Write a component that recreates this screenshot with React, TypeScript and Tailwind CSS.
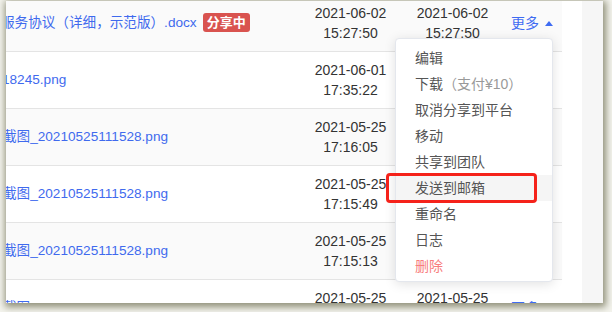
import React from "react";

const font = { fontFamily: '"Liberation Sans", "Noto Sans CJK SC", sans-serif' };

type Row = { name: string; ml: string; tag?: boolean; d1: [string, string]; d2: [string, string]; striped: boolean };

const rows: Row[] = [
  { name: "服务协议（详细，示范版）.docx", ml: "ml-[-5px]", tag: true, d1: ["2021-06-02", "15:27:50"], d2: ["2021-06-02", "15:27:50"], striped: true },
  { name: "18245.png", ml: "ml-[-4px]", d1: ["2021-06-01", "17:35:22"], d2: ["2021-06-01", "17:35:22"], striped: false },
  { name: "截图_20210525111528.png", ml: "ml-[-3px]", d1: ["2021-05-25", "17:16:05"], d2: ["2021-05-25", "17:16:05"], striped: true },
  { name: "截图_20210525111528.png", ml: "ml-[-3px]", d1: ["2021-05-25", "17:15:49"], d2: ["2021-05-25", "17:15:49"], striped: false },
  { name: "截图_20210525111528.png", ml: "ml-[-3px]", d1: ["2021-05-25", "17:15:13"], d2: ["2021-05-25", "17:15:13"], striped: true },
  { name: "截图_20210525111528.png", ml: "ml-[-3px]", d1: ["2021-05-25", "17:14:40"], d2: ["2021-05-25", "17:14:40"], striped: false },
];

function Caret() {
  return (
    <svg width="8" height="5" viewBox="0 0 8 5" className="ml-[6px]">
      <path d="M0 5 L4 0 L8 5 Z" fill="#3f6cf2" />
    </svg>
  );
}

export default function App() {
  return (
    <div className="w-[612px] h-[312px] bg-[#f4f4ee] pl-[6px] pt-[1px]" style={font}>
      <div className="relative w-[597px] h-[302px] bg-white overflow-hidden shadow-[1px_2px_7px_2px_rgba(110,110,80,0.75)]">
        <div className="flex h-full">
          <div className="w-[556px] -mt-[6px]">
            {rows.map((r, i) => (
              <div
                key={i}
                className={`flex h-[57px] border-b border-[#e4e4e4] text-[14px] ${r.striped ? "bg-[#fafafa]" : "bg-white"}`}
              >
                <div className="w-[293px] overflow-hidden flex items-center">
                  <div className={`flex items-center whitespace-nowrap ${r.ml}`}>
                    <span className="text-[#3f6aee] text-[13.6px]">{r.name}</span>
                    {r.tag && (
                      <span className="ml-[6px] h-[19px] px-[4px] rounded-[3px] bg-[#d9534f] text-white font-bold text-[13px] leading-[19px]">
                        分享中
                      </span>
                    )}
                  </div>
                </div>
                <div className="w-[103px] flex flex-col items-center justify-center leading-[20px] text-[#333]">
                  <span>{r.d1[0]}</span>
                  <span>{r.d1[1]}</span>
                </div>
                <div className="w-[101px] flex flex-col items-center justify-center leading-[20px] text-[#333]">
                  <span>{r.d2[0]}</span>
                  <span>{r.d2[1]}</span>
                </div>
                <div className="flex-1 flex items-center pl-[8px] text-[#3f6cf2]">
                  <span>更多</span>
                  {i === 0 && <Caret />}
                </div>
              </div>
            ))}
          </div>
          <div className="w-[20px] bg-white" />
          <div className="flex-1 bg-[#f6f6f6]" />
        </div>

        <div className="absolute left-[389px] top-[37px] w-[158px] h-[244px] bg-white border border-[#e4e7ed] rounded-[4px] shadow-[0_2px_12px_rgba(0,0,0,0.12)] pt-[6px] text-[14px] text-[#555]">
          {[
            <span>编辑</span>,
            <span>
              下载<span className="text-[#999]">（支付¥10）</span>
            </span>,
            <span>取消分享到平台</span>,
            <span>移动</span>,
            <span>共享到团队</span>,
            <span>发送到邮箱</span>,
            <span>重命名</span>,
            <span>日志</span>,
            <span className="text-[#f87d7d]">删除</span>,
          ].map((c, i) => (
            <div key={i} className={`h-[26px] leading-[26px] pl-[19px] ${i === 5 ? "bg-[#f5f5f5]" : ""}`}>
              {c}
            </div>
          ))}
        </div>

        <div className="absolute left-[380px] top-[172px] w-[151px] h-[30px] border-[3px] border-[#f5221a] rounded-[4px]" />
      </div>
    </div>
  );
}
